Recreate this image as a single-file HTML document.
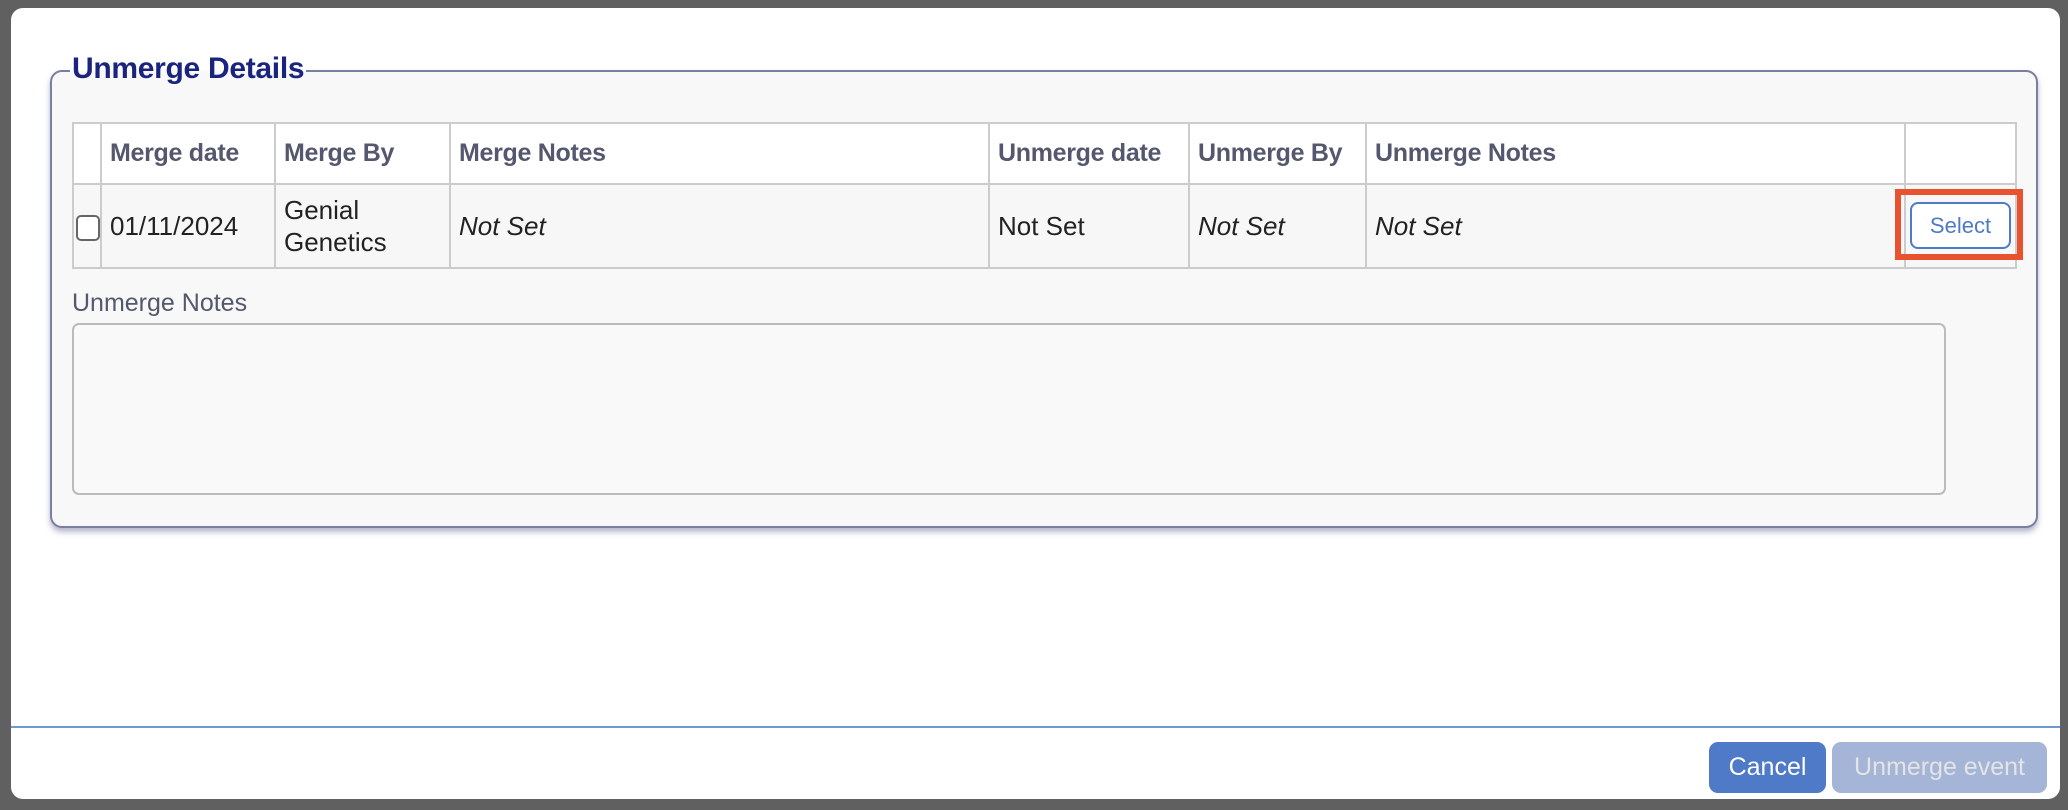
<!DOCTYPE html>
<html><head><meta charset="utf-8"><style>
*{box-sizing:border-box;margin:0;padding:0}
html,body{width:2068px;height:810px;overflow:hidden;background:#606060;font-family:"Liberation Sans",Arial,sans-serif}
.dlg{position:absolute;left:11px;top:8px;width:2049px;height:791px;background:#fff;border-radius:12px}
.fs{position:absolute;left:50px;top:70px;width:1988px;height:458px;background:#f8f8f8;border:2px solid #7a7ea3;border-radius:12px;box-shadow:0 4px 6px rgba(90,95,140,.45)}
.lg{position:absolute;left:70px;top:52px;font-size:30px;font-weight:bold;color:#1a237e;background:linear-gradient(#fff 55%,#f8f8f8 55%);padding:0 2px;letter-spacing:-.3px}
table{position:absolute;left:72px;top:122px;width:1945px;border-collapse:collapse}
td,th{border:2px solid #cccccc;text-align:left;vertical-align:middle;padding:0 8px}
th{height:61px;background:#fff;font-size:25px;color:#55576e;font-weight:bold;letter-spacing:-.3px}
td{height:84px;background:#f7f7f7;font-size:26px;color:#222;line-height:32px}
i{font-style:italic}
.cb{display:inline-block;width:24px;height:26px;border:2px solid #666;border-radius:5px;background:#fff;vertical-align:middle}
.sel{position:absolute;left:1895px;top:189px;width:128px;height:71px;border:6px solid #e8522e}
.selb{position:absolute;left:1910px;top:202px;width:101px;height:47px;border:2px solid #4e7ac7;border-radius:8px;background:#fff;color:#4e7ac7;font-size:22px;text-align:center;line-height:43px}
.lbl{position:absolute;left:72px;top:289px;font-size:25px;color:#55576e}
.ta{position:absolute;left:72px;top:323px;width:1874px;height:172px;border:2px solid #bbb;border-radius:7px;background:#f9f9f9}
.sep{position:absolute;left:11px;top:726px;width:2049px;height:2px;background:#6d9bd1}
.btn{position:absolute;top:742px;height:51px;border-radius:9px;font-size:25px;text-align:center;line-height:51px}
</style></head><body>
<div class="dlg"></div>
<div class="fs"></div>
<div class="lg">Unmerge Details</div>
<table>
<tr><th style="width:27px;padding:0"></th><th style="width:174px">Merge date</th><th style="width:175px">Merge By</th><th style="width:539px">Merge Notes</th><th style="width:200px">Unmerge date</th><th style="width:177px">Unmerge By</th><th style="width:539px">Unmerge Notes</th><th></th></tr>
<tr><td style="padding:0 0 0 2px"><span class="cb"></span></td><td>01/11/2024</td><td>Genial<br>Genetics</td><td><i>Not Set</i></td><td>Not Set</td><td><i>Not Set</i></td><td><i>Not Set</i></td><td></td></tr>
</table>
<div class="sel"></div>
<div class="selb">Select</div>
<div class="lbl">Unmerge Notes</div>
<div class="ta"></div>
<div class="sep"></div>
<div class="btn" style="left:1709px;width:117px;background:#4e7ac7;color:#fff">Cancel</div>
<div class="btn" style="left:1832px;width:215px;background:#a4b5d8;color:#e4e4e4">Unmerge event</div>
</body></html>
